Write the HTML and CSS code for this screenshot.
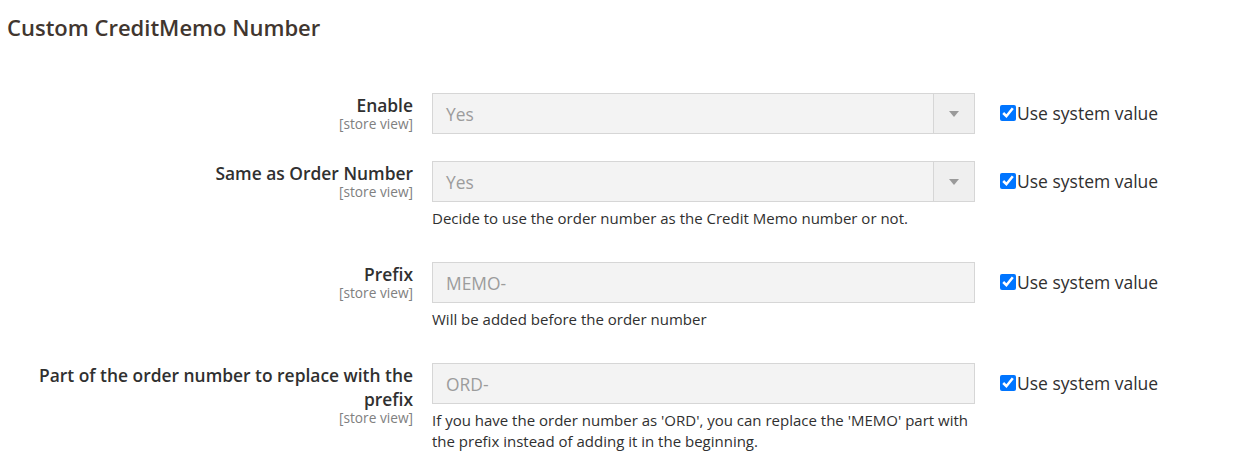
FILE: index.html
```html
<!DOCTYPE html>
<html lang="en">
<head>
    <meta charset="UTF-8">
    <title>Custom CreditMemo Number</title>
    <link rel="stylesheet" href="styles.css">
</head>
<body>
    <div class="section">
        <h2 class="section-title">Custom CreditMemo Number</h2>

        <div class="fieldset">
            <div class="field">
                <div class="field-label">
                    <span class="label-text">Enable</span>
                    <span class="scope">[store view]</span>
                </div>
                <div class="field-control">
                    <div class="select disabled">
                        <span class="value">Yes</span>
                        <span class="select-btn"><span class="arrow"></span></span>
                    </div>
                </div>
                <label class="use-default"><input type="checkbox" checked>Use system value</label>
            </div>

            <div class="field">
                <div class="field-label">
                    <span class="label-text">Same as Order Number</span>
                    <span class="scope">[store view]</span>
                </div>
                <div class="field-control">
                    <div class="select disabled">
                        <span class="value">Yes</span>
                        <span class="select-btn"><span class="arrow"></span></span>
                    </div>
                    <p class="note">Decide to use the order number as the Credit Memo number or not.</p>
                </div>
                <label class="use-default"><input type="checkbox" checked>Use system value</label>
            </div>

            <div class="field">
                <div class="field-label">
                    <span class="label-text">Prefix</span>
                    <span class="scope">[store view]</span>
                </div>
                <div class="field-control">
                    <div class="text-input disabled">MEMO-</div>
                    <p class="note">Will be added before the order number</p>
                </div>
                <label class="use-default"><input type="checkbox" checked>Use system value</label>
            </div>

            <div class="field">
                <div class="field-label">
                    <span class="label-text">Part of the order number to replace with the prefix</span>
                    <span class="scope">[store view]</span>
                </div>
                <div class="field-control">
                    <div class="text-input disabled">ORD-</div>
                    <p class="note">If you have the order number as 'ORD', you can replace the 'MEMO' part with the prefix instead of adding it in the beginning.</p>
                </div>
                <label class="use-default"><input type="checkbox" checked>Use system value</label>
            </div>
        </div>
    </div>
</body>
</html>
```

FILE: styles.css
```css
body {
    margin: 0;
    font-family: "Open Sans", Arial, sans-serif;
    color: #303030;
    background: #fff;
}
.section {
    padding: 0 7px;
}
.section-title {
    margin: 0;
    padding-top: 13px;
    font-size: 22px;
    line-height: 28px;
    font-weight: 600;
    color: #41362f;
}
.fieldset {
    padding-top: 52px;
    display: flex;
    flex-direction: column;
    gap: 27px;
}
.field {
    display: grid;
    grid-template-columns: 406px 543px auto;
    column-gap: 19px;
    align-items: start;
}
.field-label {
    display: flex;
    flex-direction: column;
    align-items: flex-end;
    text-align: right;
}
.label-text {
    font-size: 17.4px;
    font-weight: 600;
    line-height: 24px;
}
.scope {
    margin-top: 2px;
    font-size: 13.7px;
    line-height: 10px;
    color: #808080;
}
.select,
.text-input {
    height: 41px;
    box-sizing: border-box;
    border: 1px solid #d6d6d6;
    background: #f3f3f3;
    color: #9c9c9c;
    font-size: 17.4px;
    display: flex;
    align-items: center;
}
.text-input {
    padding-left: 13px;
}
.select .value {
    flex: 1;
    padding-left: 13px;
}
.select-btn {
    width: 40px;
    height: 100%;
    border-left: 1px solid #d6d6d6;
    background: #efefef;
    display: flex;
    align-items: center;
    justify-content: center;
}
.arrow {
    width: 0;
    height: 0;
    border-left: 5px solid transparent;
    border-right: 5px solid transparent;
    border-top: 6px solid #9a9a9a;
}
.note {
    margin: 6px 0 0;
    padding-bottom: 6px;
    font-size: 15px;
    line-height: 21px;
    color: #303030;
}
.use-default {
    margin-left: 6px;
    margin-top: 10px;
    display: flex;
    align-items: center;
    font-size: 17.5px;
    line-height: 20px;
    color: #303030;
}
.use-default input {
    width: 16px;
    height: 16px;
    margin: 0 1px 0 0;
}
```
